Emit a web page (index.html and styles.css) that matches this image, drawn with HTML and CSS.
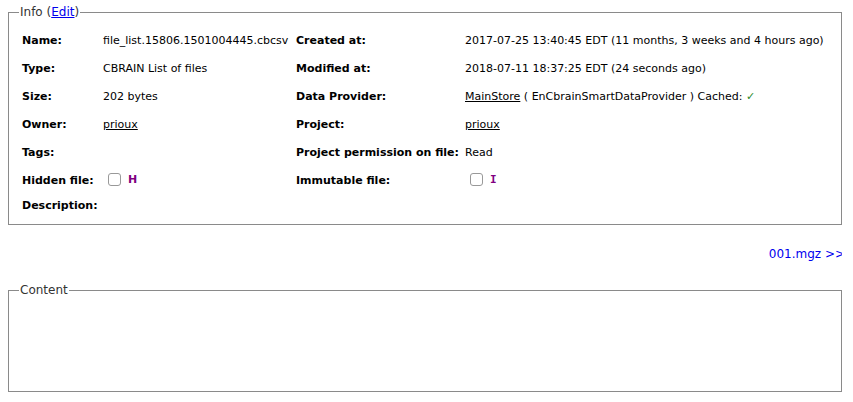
FILE: index.html
```html
<!DOCTYPE html>
<html>
<head>
<meta charset="utf-8">
<link rel="stylesheet" href="styles.css">
</head>
<body>
<fieldset class="box info">
  <legend>Info (<a href="#" class="edit">Edit</a>)</legend>
  <table class="props">
    <colgroup><col class="c1"><col class="c2"><col class="c3"><col class="c4"></colgroup>
    <tr><th>Name:</th><td>file_list.15806.1501004445.cbcsv</td><th>Created at:</th><td>2017-07-25 13:40:45 EDT (11 months, 3 weeks and 4 hours ago)</td></tr>
    <tr><th>Type:</th><td>CBRAIN List of files</td><th>Modified at:</th><td>2018-07-11 18:37:25 EDT (24 seconds ago)</td></tr>
    <tr><th>Size:</th><td>202 bytes</td><th>Data Provider:</th><td><a href="#" class="plain">MainStore</a> ( EnCbrainSmartDataProvider ) Cached: <span class="ok">✓</span></td></tr>
    <tr><th>Owner:</th><td><a href="#" class="plain">prioux</a></td><th>Project:</th><td><a href="#" class="plain">prioux</a></td></tr>
    <tr><th>Tags:</th><td></td><th>Project permission on file:</th><td>Read</td></tr>
    <tr><th>Hidden file:</th><td><span class="chk"></span><b class="flag">H</b></td><th>Immutable file:</th><td><span class="chk"></span><b class="flag serifi">I</b></td></tr>
    <tr class="last"><th>Description:</th><td></td><td></td><td></td></tr>
  </table>
</fieldset>
<div class="next"><a href="#">001.mgz &gt;&gt;</a></div>
<fieldset class="box content">
  <legend>Content</legend>
</fieldset>
</body>
</html>
```
FILE: styles.css
```css
body {
  margin: 5px 11px 8px 8px;
  font-family: "DejaVu Sans", Verdana, sans-serif;
  font-size: 11px;
  color: #000;
  background: #fff;
}
.box {
  border: 1px solid #8a8a8a;
  margin: 0;
  padding: 0 0 8px 13px;
  min-width: 0;
}
legend {
  padding: 0 1px;
  margin-left: -3px;
  color: #333;
  font-size: 12px;
}
a.edit { color: #0000ee; }
.props {
  border-collapse: collapse;
  table-layout: fixed;
  width: 100%;
  margin-top: 7px;
}
.c1 { width: 81px; }
.c2 { width: 193px; }
.c3 { width: 169px; }
.props th, .props td {
  height: 28px;
  padding: 0;
  text-align: left;
  vertical-align: middle;
  white-space: nowrap;
}
.props tr.last th, .props tr.last td { height: 22px; }
.props th { font-weight: bold; }
a.plain { color: #000; }
.ok { color: #2a8a2a; }
.chk {
  display: inline-block;
  width: 11px;
  height: 11px;
  border: 1px solid #999;
  border-radius: 3px;
  vertical-align: middle;
  margin: 0 7px 0 5px;
  position: relative;
  top: -1px;
}
.flag { color: #800080; }
.serifi { font-family: "DejaVu Sans Mono", monospace; }
.next {
  text-align: right;
  margin: 22px -3px 0 0;
  height: 14px;
  font-size: 12px;
}
.next a { color: #0000ee; text-decoration: none; }
.content {
  margin-top: 22px;
  height: 99px;
}
```
